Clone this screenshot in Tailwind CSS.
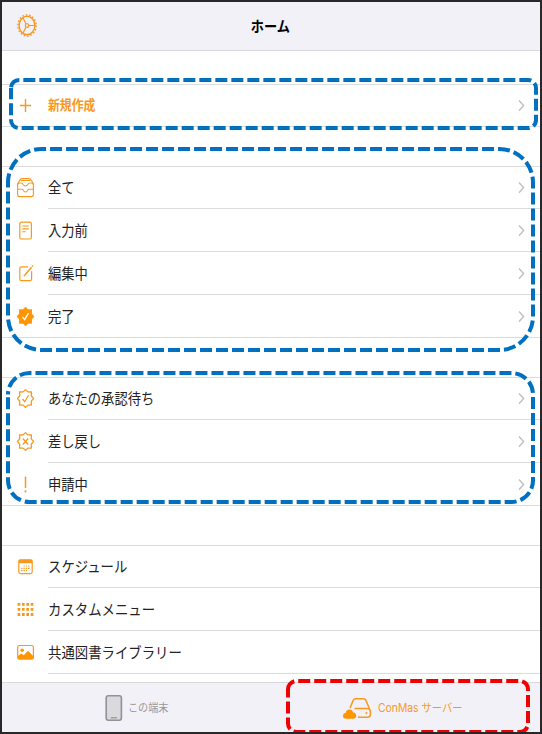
<!DOCTYPE html>
<html lang="ja">
<head>
    <meta charset="UTF-8">
    <meta name="viewport" content="width=device-width, initial-scale=1.0">
    <script src="https://cdn.jsdelivr.net/npm/@tailwindcss/browser@4"></script>
    <title>ホーム</title>
</head>
<body class="bg-white font-['Noto_Sans_CJK_JP',sans-serif]">
    <!-- shared icons -->
    <svg class="hidden">
        <symbol id="chevron" viewBox="0 0 8 21"><path d="M1 5.4 5.6 10.6 1 15.8" fill="none" stroke="#c2c2c4" stroke-width="1.5"/></symbol>
        <symbol id="seal" viewBox="0 0 21 21"><path d="M10.5 1.6 12.9 3.9 16.4 4 16.3 7.8 18.5 10.5 16.3 13.2 16.4 17 12.9 17.1 10.5 19.4 8.1 17.1 4.6 17 4.7 13.2 2.5 10.5 4.7 7.8 4.6 4 8.1 3.9Z" stroke="#f8981d" stroke-width="1.3" stroke-linejoin="round"/></symbol>
    </svg>
    <div class="relative flex flex-col w-[542px] h-[734px] border-2 border-[#28282a] overflow-hidden">
        <header class="relative flex items-center justify-center h-[49px] shrink-0 bg-[#f2f1f7] border-b border-[#d9d9dc]">
            <svg class="absolute left-[14px] top-[11px] w-[22px] h-[25px]" viewBox="0 0 22 25" fill="none" stroke="#f8981d">
                <ellipse cx="11" cy="12.5" rx="9.1" ry="10.6" stroke-width="1.4" stroke-dasharray="1.6 1.85"/>
                <ellipse cx="11" cy="12.5" rx="7.9" ry="9.3" stroke-width="1.4"/>
                <ellipse cx="11" cy="12.5" rx="1.7" ry="1.9" stroke-width="1.2"/>
                <path d="M12.8 12.5H18.5M10 10.8 7 5M10 14.2 7 20" stroke-width="1.2"/>
            </svg>
            <h1 class="pb-[2px] pr-[2px] text-[15px] leading-[21px] font-bold text-black scale-x-[0.88]">ホーム</h1>
        </header>

        <main class="flex flex-col gap-[39px] pt-[33px] h-[631px] shrink-0 text-[15px] leading-[19px] text-[#222]">
            <section class="border-y border-[#dcdcde]">
                <div class="flex h-[41px] pt-[10px] pl-[13px] pr-[14px] gap-3 text-[#f8981d]">
                    <svg class="w-[21px] h-[21px]" viewBox="0 0 21 21"><path d="M10.5 4V17M4.8 10.5H16.2" stroke="#f8981d" stroke-width="1.4"/></svg>
                    <span class="flex-1 origin-left scale-x-[0.885] text-[13.4px] font-bold">新規作成</span>
                    <svg class="w-2 h-[21px]"><use href="#chevron"/></svg>
                </div>
            </section>

            <section class="border-y border-[#dcdcde]">
                <div class="flex h-[42px] pl-[13px] gap-3">
                    <svg class="w-[21px] h-[21px] mt-[10px]" viewBox="0 0 21 21" fill="none" stroke="#f8981d" stroke-width="1.1">
                        <path d="M2.6 8.4V7L4.8 3.1Q5.6 1.6 7 1.6H14Q15.4 1.6 16.2 3.1L18.4 7V17.6Q18.4 19.6 16.4 19.6H4.6Q2.6 19.6 2.6 17.6Z"/>
                        <path d="M2.6 7.4Q3.3 6 4.5 6H6.2Q7.4 6 8.2 7.6 9 9 10.5 9T12.8 7.6Q13.6 6 14.8 6H16.5Q17.7 6 18.4 7.4M2.6 12.3H7.4Q8.2 12.3 8.5 13.4 9 15 10.5 15T12.5 13.4Q12.8 12.3 13.6 12.3H18.4M5.4 3.5H15.6"/>
                    </svg>
                    <div class="flex flex-1 pt-[10px] pr-[14px] border-b border-[#dcdcde]">
                        <span class="flex-1 origin-left scale-x-[0.885]">全て</span>
                        <svg class="w-2 h-[21px]"><use href="#chevron"/></svg>
                    </div>
                </div>
                <div class="flex h-[43px] pl-[13px] gap-3">
                    <svg class="w-[21px] h-[21px] mt-[11px]" viewBox="0 0 21 21" fill="none" stroke="#f8981d" stroke-width="1.2">
                        <rect x="4.8" y="2.2" width="11.6" height="16.8" rx="1.8"/>
                        <path d="M7.4 6H13.8M7.4 8.9H13.8M7.4 11.8H10.8" stroke-width="1.1"/>
                    </svg>
                    <div class="flex flex-1 pt-[11px] pr-[14px] border-b border-[#dcdcde]">
                        <span class="flex-1 origin-left scale-x-[0.885]">入力前</span>
                        <svg class="w-2 h-[21px]"><use href="#chevron"/></svg>
                    </div>
                </div>
                <div class="flex h-[43px] pl-[13px] gap-3">
                    <svg class="w-[21px] h-[21px] mt-[11px]" viewBox="0 0 21 21" fill="none" stroke="#f8981d" stroke-width="1.2">
                        <path d="M13 3.9H6.4Q4.8 3.9 4.8 5.7V15.9Q4.8 17.7 6.4 17.7H15Q16.6 17.7 16.6 15.9V8.2"/>
                        <path d="M9.8 12 16.6 4.2" stroke-width="1.5"/>
                        <path d="M17 3.6 17.9 2.5M9.1 13.2 9.6 12" stroke-width="1.4"/>
                    </svg>
                    <div class="flex flex-1 pt-[11px] pr-[14px] border-b border-[#dcdcde]">
                        <span class="flex-1 origin-left scale-x-[0.885]">編集中</span>
                        <svg class="w-2 h-[21px]"><use href="#chevron"/></svg>
                    </div>
                </div>
                <div class="flex h-[42px] pt-[11px] pl-[13px] pr-[14px] gap-3">
                    <svg class="w-[21px] h-[21px]" viewBox="0 0 21 21"><use href="#seal" fill="#ff9500"/><path d="M7.5 11 9.7 13.7 13.5 7.2" fill="none" stroke="#fff" stroke-width="1.3"/></svg>
                    <span class="flex-1 origin-left scale-x-[0.885]">完了</span>
                    <svg class="w-2 h-[21px]"><use href="#chevron"/></svg>
                </div>
            </section>

            <section class="border-y border-[#dcdcde]">
                <div class="flex h-[42px] pl-[13px] gap-3">
                    <svg class="w-[21px] h-[21px] mt-[10px]" viewBox="0 0 21 21" fill="none"><use href="#seal"/><path d="M7.5 11 9.7 13.7 13.5 7.2" stroke="#f8981d" stroke-width="1.2"/></svg>
                    <div class="flex flex-1 pt-[10px] pr-[14px] border-b border-[#dcdcde]">
                        <span class="flex-1 origin-left scale-x-[0.885]">あなたの承認待ち</span>
                        <svg class="w-2 h-[21px]"><use href="#chevron"/></svg>
                    </div>
                </div>
                <div class="flex h-[43px] pl-[13px] gap-3">
                    <svg class="w-[21px] h-[21px] mt-[11px]" viewBox="0 0 21 21" fill="none"><use href="#seal"/><path d="M7.8 7.5 13.2 13.5M13.2 7.5 7.8 13.5" stroke="#f8981d" stroke-width="1.2"/></svg>
                    <div class="flex flex-1 pt-[11px] pr-[14px] border-b border-[#dcdcde]">
                        <span class="flex-1 origin-left scale-x-[0.885]">差し戻し</span>
                        <svg class="w-2 h-[21px]"><use href="#chevron"/></svg>
                    </div>
                </div>
                <div class="flex h-[42px] pt-[11px] pl-[13px] pr-[14px] gap-3">
                    <svg class="w-[21px] h-[21px]" viewBox="0 0 21 21" stroke="#f8981d" stroke-width="1.5" stroke-linecap="round"><path d="M10.5 3.2V13.6"/><path d="M10.5 17.3V17.4" stroke-width="2"/></svg>
                    <span class="flex-1 origin-left scale-x-[0.885]">申請中</span>
                    <svg class="w-2 h-[21px]"><use href="#chevron"/></svg>
                </div>
            </section>

            <section class="border-t border-[#dcdcde]">
                <div class="flex h-[42px] pl-[13px] gap-3">
                    <svg class="w-[21px] h-[21px] mt-[10px]" viewBox="0 0 21 21" fill="none" stroke="#f8981d">
                        <rect x="3.8" y="3.8" width="13.4" height="13.8" rx="1.8" stroke-width="1.2"/>
                        <path d="M3.8 5.5H17.2" stroke-width="3.4"/>
                        <path d="M8.5 10H15M6.2 12.3H15M6.2 14.6H13" stroke-width="1.2" stroke-dasharray="1.3 1"/>
                    </svg>
                    <div class="flex flex-1 pt-[10px] border-b border-[#dcdcde]">
                        <span class="origin-left scale-x-[0.892]">スケジュール</span>
                    </div>
                </div>
                <div class="flex h-[43px] pl-[13px] gap-3">
                    <svg class="w-[21px] h-[21px] mt-[11px]" viewBox="0 0 21 21" stroke="#f8981d" stroke-width="2.8">
                        <path d="M2.6 5.3H18.7M2.6 10.4H18.7M2.6 15.5H18.7" stroke-dasharray="2.7 1.65"/>
                    </svg>
                    <div class="flex flex-1 pt-[11px] border-b border-[#dcdcde]">
                        <span class="origin-left scale-x-[0.892]">カスタムメニュー</span>
                    </div>
                </div>
                <div class="flex h-[43px] pl-[13px] gap-3">
                    <svg class="w-[21px] h-[21px] mt-[11px]" viewBox="0 0 21 21">
                        <rect x="2.7" y="3.5" width="15.7" height="13.6" rx="1.6" fill="none" stroke="#f8981d" stroke-width="1.2"/>
                        <circle cx="7.2" cy="8.2" r="1.8" fill="#ff9500"/>
                        <path d="M3 14 6.2 11.6 8.8 13.3 13 8.8 18.2 14V17H3Z" fill="#ff9500"/>
                    </svg>
                    <div class="flex flex-1 pt-[11px] border-b border-[#dcdcde]">
                        <span class="origin-left scale-x-[0.892]">共通図書ライブラリー</span>
                    </div>
                </div>
            </section>
        </main>

        <footer class="flex h-[50px] shrink-0 bg-[#f2f1f7] border-t border-[#d9d9dc] text-[11.5px] leading-[20px]">
            <div class="flex items-center w-[269px] pl-[103px] gap-[5px] text-[#98989c]">
                <svg class="w-[18px] h-[28px]" viewBox="0 0 18 28"><rect x="1.2" y="1.7" width="15.2" height="24.6" rx="2.2" fill="#d9d9de" stroke="#929296" stroke-width="1.6"/><path d="M5.8 23.8H12" stroke="#929296" stroke-width="1.2"/></svg>
                <span class="pb-[2px] origin-left scale-x-[0.88]">この端末</span>
            </div>
            <div class="flex items-center flex-1 pl-[70px] gap-[6px] text-[#f8981d]">
                <svg class="w-[31px] h-[24px]" viewBox="0 0 31 24" fill="none" stroke="#f8981d" stroke-width="1.5">
                    <path d="M9 12 12.2 4.4Q12.9 2.8 14.6 2.8H22.4Q24.2 2.8 24.9 4.4L28.6 13"/>
                    <path d="M13.5 12.6H26.5Q29.4 13 29.4 16V18.6Q29.4 21.3 26.5 21.3H17"/>
                    <circle cx="25.4" cy="17" r=".8" fill="#f8981d" stroke-width=".6"/>
                    <path d="M5.2 22.8Q2 22.8 2 20 2 17.3 4.6 17.1 5.2 13.6 8.4 13.6 11.4 13.6 12.2 16.5 15.2 16.8 15.2 19.8 15.2 22.8 12 22.8Z" fill="#ff9500" stroke="none"/>
                </svg>
                <span class="origin-left scale-x-[0.9] whitespace-nowrap font-['Inter','Noto_Sans_CJK_JP',sans-serif]">ConMas サーバー</span>
            </div>
        </footer>

        <!-- highlight frames drawn over the screen -->
        <svg class="absolute -left-[2px] -top-[2px] w-[542px] h-[734px]" viewBox="0 0 542 734" fill="none" stroke="#0070c0" stroke-width="4" stroke-dasharray="12 4">
            <path d="M11 88A8 8 0 0 1 19 80H528A8 8 0 0 1 536 88V120A8 8 0 0 1 528 128H19A8 8 0 0 1 11 120Z" stroke-dashoffset="-0.8"/>
            <path d="M8 182.5A33.5 33.5 0 0 1 41.5 149H499.5A33.5 33.5 0 0 1 533 182.5V316.5A33.5 33.5 0 0 1 499.5 350H41.5A33.5 33.5 0 0 1 8 316.5Z" stroke-dashoffset="2.9"/>
            <path d="M8 394.5A21.5 21.5 0 0 1 29.5 373H511.5A21.5 21.5 0 0 1 533 394.5V480.5A21.5 21.5 0 0 1 511.5 502H29.5A21.5 21.5 0 0 1 8 480.5Z" stroke-dashoffset="8.5"/>
            <path d="M288 689.5A8.5 8.5 0 0 1 296.5 681H519.5A8.5 8.5 0 0 1 528 689.5V723.5A8.5 8.5 0 0 1 519.5 732H296.5A8.5 8.5 0 0 1 288 723.5Z" stroke="#f00000" stroke-dashoffset="1"/>
        </svg>
    </div>
</body>
</html>
